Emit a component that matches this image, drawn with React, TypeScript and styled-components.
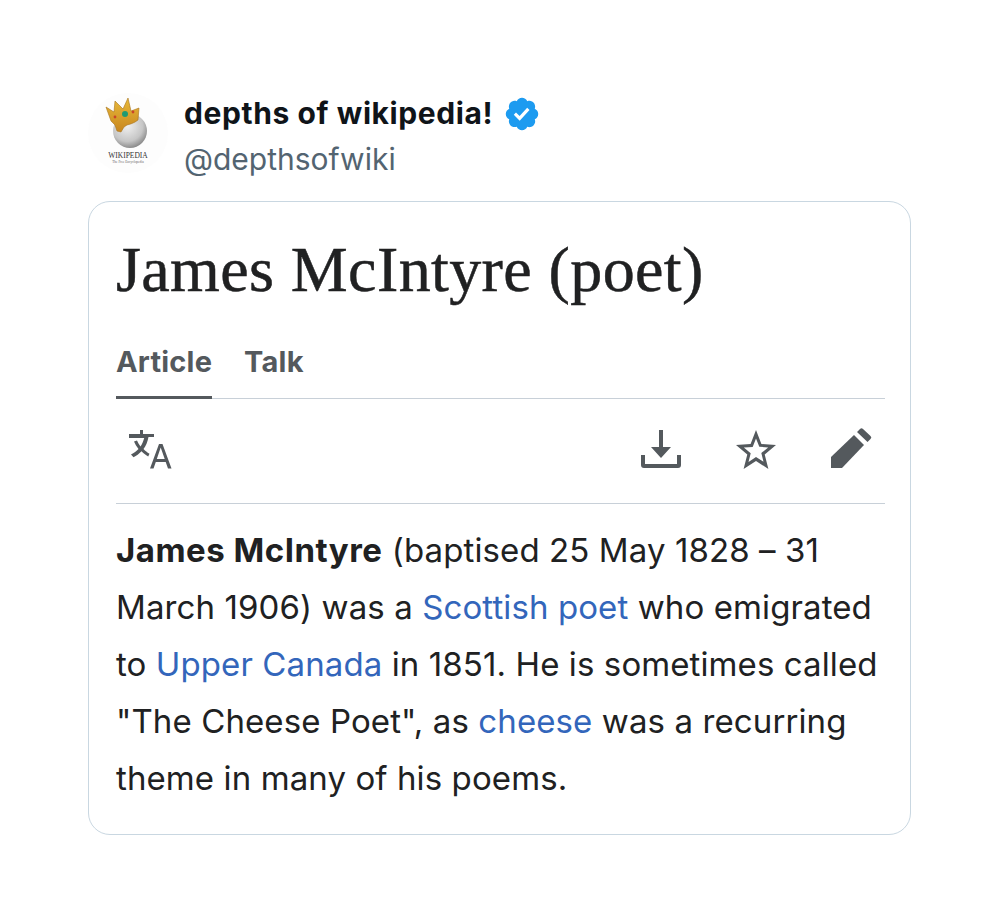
import React from "react";
import styled, { createGlobalStyle } from "styled-components";

const Global = createGlobalStyle`
  html, body { margin: 0; padding: 0; background: #fff; }
  body { font-family: Inter, "Liberation Sans", Arial, sans-serif; }
`;

const Page = styled.div`
  width: 996px;
  height: 922px;
  padding: 93px 85px 0 88px;
  box-sizing: border-box;
  overflow: hidden;
`;

const Header = styled.header`
  display: flex;
  align-items: flex-start;
  height: 108px;
`;

const Avatar = styled.svg`
  width: 80px;
  height: 80px;
  flex: none;
  margin-right: 16px;
`;

const Identity = styled.div`
  display: flex;
  flex-direction: column;
`;

const NameRow = styled.div`
  display: flex;
  align-items: center;
  gap: 10px;
  height: 42px;
`;

const Name = styled.span`
  font-size: 30px;
  font-weight: 700;
  letter-spacing: 0.6px;
  color: #0f1419;
  margin-top: -2px;
`;

const Handle = styled.span`
  font-size: 30px;
  line-height: 49px;
  color: #536471;
`;

const Card = styled.article`
  width: 823px;
  height: 634px;
  box-sizing: border-box;
  border: 1px solid #c9d7e1;
  border-radius: 22px;
  padding: 29px 25px 0 27px;
`;

const Title = styled.h1`
  margin: 0;
  font-family: "Liberation Serif", "Times New Roman", serif;
  font-weight: 400;
  font-size: 64px;
  line-height: 78px;
  letter-spacing: 0.4px;
  color: #202122;
  -webkit-text-stroke: 0.5px #202122;
`;

const Tabs = styled.nav`
  display: flex;
  gap: 32px;
  margin-top: 35px;
  height: 54px;
  border-bottom: 1px solid #c8d0d8;
`;

const Tab = styled.span<{ $active?: boolean }>`
  font-size: 29px;
  font-weight: 700;
  line-height: 36px;
  letter-spacing: 0.2px;
  color: #54595d;
  height: 55px;
  box-sizing: border-box;
  border-bottom: ${(p) => (p.$active ? "3px solid #54595d" : "none")};
`;

const Toolbar = styled.div`
  display: flex;
  align-items: center;
  justify-content: space-between;
  height: 105px;
  padding: 0 12px 4px 12px;
  box-sizing: border-box;
  border-bottom: 1px solid #c8d0d8;
`;

const ActionGroup = styled.div`
  display: flex;
  align-items: center;
  gap: 51px;
`;

const Icon = styled.svg`
  width: 44px;
  height: 44px;
  display: block;
  fill: #54595d;
`;

const Body = styled.p`
  margin: 18px 0 0;
  font-size: 33px;
  line-height: 57px;
  letter-spacing: 0.1px;
  color: #202122;
`;

const Strong = styled.strong`
  font-weight: 700;
  letter-spacing: 0.5px;
`;

const WikiLink = styled.a`
  color: #3366bb;
  text-decoration: none;
`;

export default function App() {
  return (
    <Page>
      <Global />
      <Header>
        <Avatar viewBox="0 0 80 80">
          <defs>
            <radialGradient id="globe" cx="42%" cy="35%" r="70%">
              <stop offset="0%" stopColor="#f0f0f0" />
              <stop offset="65%" stopColor="#c6c6c6" />
              <stop offset="100%" stopColor="#7f7f7f" />
            </radialGradient>
            <linearGradient id="crown" x1="0" y1="0" x2="0" y2="1">
              <stop offset="0%" stopColor="#e8b93a" />
              <stop offset="100%" stopColor="#c8861f" />
            </linearGradient>
          </defs>
          <circle cx="40" cy="40" r="40" fill="#fdfdfd" />
          <circle cx="42" cy="38" r="17" fill="url(#globe)" />
          <path d="M18 14l8 5 1-11 8 8 5-11 3 13 8-3-1 12c-4 3-7 4-11 5l-3 2-3 5-4-1-2-6-4-4z" fill="url(#crown)" stroke="#a8741c" strokeWidth="0.6" />
          <circle cx="37" cy="21" r="3" fill="#1f9a72" />
          <circle cx="27" cy="24" r="1.400" fill="#c9442a" />
          <circle cx="45" cy="19" r="1.400" fill="#c9442a" />
          <text x="40" y="65" textAnchor="middle" fontFamily="Liberation Serif, serif" fontSize="7.5" fill="#333">WIKIPEDIA</text>
          <text x="40" y="70" textAnchor="middle" fontFamily="Liberation Serif, serif" fontSize="3.4" fill="#666">The Free Encyclopedia</text>
        </Avatar>
        <Identity>
          <NameRow>
            <Name>depths of wikipedia!</Name>
            <svg width="38" height="38" viewBox="0 0 22 22">
              <path fill="#1d9bf0" d="M20.396 11c-.018-.646-.215-1.275-.57-1.816-.354-.54-.852-.972-1.438-1.246.223-.607.27-1.264.14-1.897-.131-.634-.437-1.218-.882-1.687-.47-.445-1.053-.75-1.687-.882-.633-.13-1.29-.083-1.897.14-.273-.587-.704-1.086-1.245-1.44S11.647 1.62 11 1.604c-.646.017-1.273.213-1.813.568s-.969.854-1.24 1.44c-.608-.223-1.267-.272-1.902-.14-.635.13-1.22.436-1.69.882-.445.47-.749 1.055-.878 1.688-.13.633-.08 1.29.144 1.896-.587.274-1.087.705-1.443 1.245-.356.54-.555 1.17-.574 1.817.02.647.218 1.276.574 1.817.356.54.856.972 1.443 1.245-.224.606-.274 1.263-.144 1.896.13.634.433 1.218.877 1.688.47.443 1.054.747 1.687.878.633.132 1.29.084 1.897-.136.274.586.705 1.084 1.246 1.439.54.354 1.17.551 1.816.569.647-.016 1.276-.213 1.817-.567s.972-.854 1.245-1.44c.604.239 1.266.296 1.903.164.636-.132 1.22-.447 1.68-.907.46-.46.776-1.044.908-1.681s.075-1.299-.165-1.903c.586-.274 1.084-.705 1.439-1.246.354-.54.551-1.17.569-1.816z" />
              <path fill="#fff" d="M9.662 14.85l-3.429-3.428 1.293-1.302 2.072 2.072 4.4-4.794 1.347 1.246z" />
            </svg>
          </NameRow>
          <Handle>@depthsofwiki</Handle>
        </Identity>
      </Header>
      <Card>
        <Title>James McIntyre (poet)</Title>
        <Tabs>
          <Tab $active>Article</Tab>
          <Tab>Talk</Tab>
        </Tabs>
        <Toolbar>
          <Icon viewBox="0 0 44 44">
            <path d="M1 7h25v3h-5.500c-1 5-2.500 9-5 12 2 2 3.500 3.300 6 4.800l-1.300 2.700c-2.700-1.700-4.700-3.300-6.700-5.300-2.500 2.500-5 4.500-8 6L3 27.500c3-1.500 5.500-3.300 7.500-5.500-2-2.500-3.500-5-4.500-7.500l3-1c.8 2 2 4 3.500 6 1.800-2.700 3-5.800 3.700-8.500H1zM12 3h3v4h-3z" />
            <path d="M31 17h3.500l9 24.500H40l-2.300-6.500H27.800l-2.300 6.500H22zm-2.200 15h7.900L32.700 20.500z" />
          </Icon>
          <ActionGroup>
            <Icon viewBox="0 0 44 44">
              <path d="M20 3h4v17h8L22 31 12 20h8z" />
              <path d="M2 28h4v9h32v-9h4v10a3 3 0 0 1-3 3H5a3 3 0 0 1-3-3z" />
            </Icon>
            <Icon viewBox="0 0 44 44">
              <path fillRule="evenodd" d="M22 3l5.400 14 14.600 1-11.300 9.400L34.400 42 22 34 9.600 42l3.700-14.600L2 18l14.600-1zm0 8.500l-3.300 8.500-8.900.6 6.900 5.700-2.200 8.700L22 30l7.500 4.800-2.200-8.700 6.900-5.700-8.900-.6z" />
            </Icon>
            <Icon viewBox="0 0 44 44">
              <path d="M2 41V30L25 8l10 10-22 23z" />
              <path d="M28 5l3-3a2 2 0 0 1 3 0l7.500 7a2 2 0 0 1 0 3l-3 3z" />
            </Icon>
          </ActionGroup>
        </Toolbar>
        <Body>
          <Strong>James McIntyre</Strong> (baptised 25 May 1828 – 31 March 1906) was a{" "}
          <WikiLink>Scottish poet</WikiLink> who emigrated to <WikiLink>Upper Canada</WikiLink> in 1851. He is sometimes called "The Cheese Poet", as{" "}
          <WikiLink>cheese</WikiLink> was a recurring theme in many of his poems.
        </Body>
      </Card>
    </Page>
  );
}
